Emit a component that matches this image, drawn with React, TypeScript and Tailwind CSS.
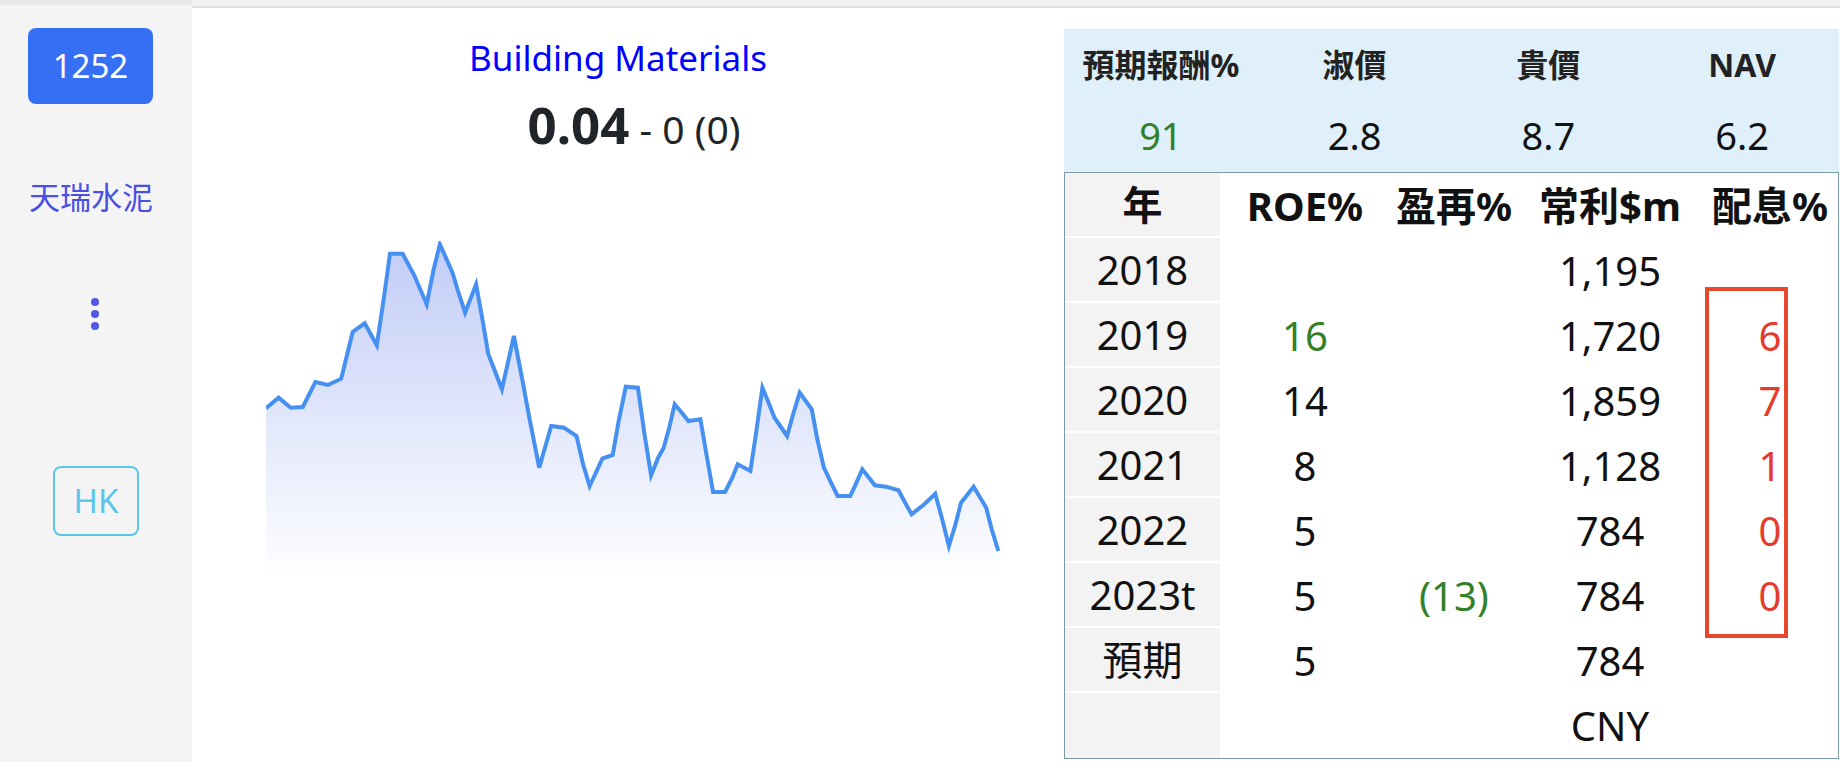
import React from "react";

const raw: [number, number][] = [
  [120, 622], [143, 590], [165, 620], [187, 618], [210, 543], [233, 552], [257, 533], [268, 460],
  [278, 393], [300, 367], [322, 433], [335, 290], [346, 158], [369, 158], [390, 222], [413, 310],
  [425, 210], [437, 130], [460, 215], [470, 270], [483, 335], [503, 250], [515, 360], [525, 458],
  [550, 565], [572, 405], [590, 560], [600, 650], [618, 800], [640, 675], [663, 680], [686, 705],
  [698, 790], [710, 855], [720, 820], [733, 773], [752, 762], [763, 660], [776, 557], [798, 560],
  [810, 700], [822, 823], [835, 770], [845, 740], [855, 680], [865, 610], [878, 635], [890, 660],
  [912, 655], [925, 780], [935, 873], [957, 873], [970, 830], [980, 790], [1003, 810], [1013, 700],
  [1025, 560], [1035, 600], [1047, 650], [1070, 705], [1080, 645], [1093, 575], [1115, 625], [1125, 715],
  [1137, 800], [1150, 845], [1162, 885], [1185, 885], [1195, 850], [1207, 805], [1230, 853], [1250, 857],
  [1273, 868], [1285, 905], [1297, 940], [1320, 910], [1340, 878], [1352, 950], [1365, 1035], [1377, 970],
  [1387, 905], [1410, 857], [1422, 890], [1433, 920], [1443, 985], [1455, 1050],
];

const pts = raw.map(([x, y]) => [(x - 120) / 1.823, y / 3 - 40]);
const line = pts.map(([x, y], i) => `${i ? "L" : "M"}${x.toFixed(1)},${y.toFixed(1)}`).join(" ");
const area = `${line} L${pts[pts.length - 1][0].toFixed(1)},340 L0,340 Z`;

type Row = { year: string; roe?: string; reinv?: string; profit: string; div?: string };

const rows: Row[] = [
  { year: "2018", profit: "1,195" },
  { year: "2019", roe: "16", profit: "1,720", div: "6" },
  { year: "2020", roe: "14", profit: "1,859", div: "7" },
  { year: "2021", roe: "8", profit: "1,128", div: "1" },
  { year: "2022", roe: "5", profit: "784", div: "0" },
  { year: "2023t", roe: "5", reinv: "(13)", profit: "784", div: "0" },
  { year: "預期", roe: "5", profit: "784" },
  { year: "", profit: "CNY" },
];

function PriceChart() {
  return (
    <svg width="734" height="340" viewBox="0 0 734 340" className="block ml-[74px]">
      <defs>
        <linearGradient id="fill" x1="0" y1="0" x2="0" y2="1">
          <stop offset="0%" stopColor="#c2cdf7" />
          <stop offset="100%" stopColor="#ffffff" />
        </linearGradient>
      </defs>
      <path d={area} fill="url(#fill)" />
      <path d={line} fill="none" stroke="#4590f0" strokeWidth="4" strokeLinejoin="miter" />
    </svg>
  );
}

export default function App() {
  return (
    <div className="flex h-[762px] w-[1840px] overflow-hidden bg-white font-['Noto_Sans','Noto_Sans_CJK_TC',sans-serif]">
      {/* Sidebar */}
      <aside className="w-[192px] shrink-0 bg-[#f4f4f4] border-t-[5px] border-[#e8e8e8] flex flex-col items-center">
        <div className="self-start ml-[28px] mt-[23px] w-[125px] h-[76px] rounded-lg bg-[#356ff3] text-white text-[33px] flex items-center justify-center">
          1252
        </div>
        <div className="self-start ml-[28px] mt-[73px] w-[126px] text-center text-[31px] leading-[40px] text-[#4a4ee3]">
          天瑞水泥
        </div>
        <div className="mt-[81px] ml-[-2px] flex flex-col gap-[4px]">
          <span className="block w-[8px] h-[8px] rounded-full bg-[#5358e4]" />
          <span className="block w-[8px] h-[8px] rounded-full bg-[#5358e4]" />
          <span className="block w-[8px] h-[8px] rounded-full bg-[#5358e4]" />
        </div>
        <div className="mt-[136px] w-[86px] h-[70px] rounded-[8px] border-2 border-[#5cc6ea] text-[#5cc6ea] text-[33px] flex items-center justify-center">
          HK
        </div>
      </aside>

      <main className="flex-1 flex flex-col">
        <div className="h-[8px] shrink-0 bg-[#f0f0f0] border-b-2 border-[#dce2e6]" />
        <div className="flex flex-1">
          {/* Chart column */}
          <section className="w-[872px] shrink-0">
            <div className="w-[852px] text-center pt-[30px]">
              <div className="text-[35px] leading-[40px] text-[#0000ff]">Building Materials</div>
              <div className="mt-[21px] pl-[32px] leading-[50px] text-[#212529]">
                <span className="text-[51px] font-bold">0.04</span>
                <span className="text-[39px]"> - 0 (0)</span>
              </div>
            </div>
            <div className="mt-[78px]">
              <PriceChart />
            </div>
          </section>

          {/* Stats panel */}
          <section className="w-[776px] shrink-0 pt-[21px] pr-[1px] relative">
            <div className="bg-[#dff0fa] grid grid-cols-4 text-center">
              <div className="h-[70px] pt-[1px] flex items-center justify-center text-[32px] font-bold text-[#222]">預期報酬%</div>
              <div className="h-[70px] pt-[1px] flex items-center justify-center text-[32px] font-bold text-[#222]">淑價</div>
              <div className="h-[70px] pt-[1px] flex items-center justify-center text-[32px] font-bold text-[#222]">貴價</div>
              <div className="h-[70px] pt-[1px] flex items-center justify-center text-[32px] font-bold text-[#222]">NAV</div>
              <div className="h-[73px] flex items-center justify-center text-[38px] text-[#33802a]">91</div>
              <div className="h-[73px] flex items-center justify-center text-[38px] text-[#111]">2.8</div>
              <div className="h-[73px] flex items-center justify-center text-[38px] text-[#111]">8.7</div>
              <div className="h-[73px] flex items-center justify-center text-[38px] text-[#111]">6.2</div>
            </div>

            <div className="border border-[#7d9aab] text-[40px] text-[#111]">
              <div className="grid grid-cols-[155px_170px_128px_184px_1fr] h-[65px] font-bold">
                <div className="bg-[#f3f3f3] border-b-2 border-white flex items-center justify-center">年</div>
                <div className="flex items-center justify-center">ROE%</div>
                <div className="flex items-center justify-center">盈再%</div>
                <div className="flex items-center justify-center">常利$m</div>
                <div className="flex items-center justify-center">配息%</div>
              </div>
              {rows.map((r, i) => (
                <div key={i} className="grid grid-cols-[155px_170px_128px_184px_1fr] h-[65px]">
                  <div className={`bg-[#f3f3f3] flex items-center justify-center ${i < rows.length - 1 ? "border-b-2 border-white" : ""}`}>
                    {r.year}
                  </div>
                  <div className={`flex items-center justify-center ${r.roe === "16" ? "text-[#33802a]" : ""}`}>{r.roe}</div>
                  <div className="flex items-center justify-center text-[#33802a]">{r.reinv}</div>
                  <div className="flex items-center justify-center">{r.profit}</div>
                  <div className="flex items-center justify-center text-[#e53b2c]">{r.div}</div>
                </div>
              ))}
            </div>

            {/* annotation box */}
            <div className="absolute left-[641px] top-[279px] w-[83px] h-[351px] border-4 border-[#e8472e]" />
          </section>
        </div>
      </main>
    </div>
  );
}
